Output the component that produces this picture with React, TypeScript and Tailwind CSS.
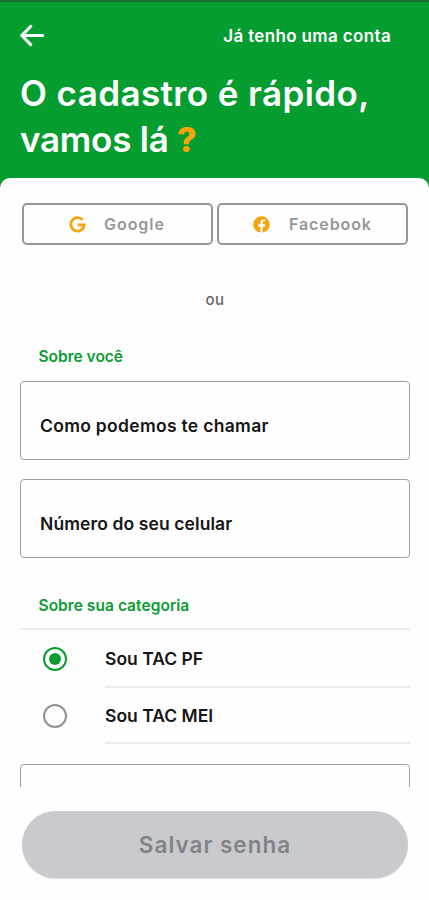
import type { ReactNode } from "react";

const categories = [
    { id: 'pf', name: 'Sou TAC PF', height: 'h-[58px]' },
    { id: 'mei', name: 'Sou TAC MEI', height: 'h-[56px]' },
]

function BackIcon() {
    return (
        <svg width="26" height="24" viewBox="0 0 26 24" fill="none" stroke="#fff" strokeWidth="3.2" strokeLinecap="round" strokeLinejoin="round">
            <path d="M1.8 11.5H22.6M10.6 2.5L1.8 11.5L10.6 20.5"/>
        </svg>
    )
}

function GoogleIcon() {
    return (
        <svg width="17" height="17" viewBox="0 0 17 17" fill="none" stroke="#f7a30c" strokeWidth="2.8">
            <path d="M13.5 3.9A6.7 6.7 0 1 0 15.2 8.9H8.7"/>
        </svg>
    )
}

function FacebookIcon() {
    return (
        <svg width="17" height="17" viewBox="0 0 17 17">
            <circle cx="8.5" cy="8.5" r="8.3" fill="#f7a30c"/>
            <path d="M7.4 17V10.7H5.2V8.3H7.4V6.6C7.4 4.3 8.7 3.2 10.7 3.2L12.3 3.3V5.3H11.1C10 5.3 9.7 5.9 9.7 6.7V8.3H12.2L11.8 10.7H9.7V17Z" fill="#fff"/>
        </svg>
    )
}

function SocialButton({ icon, children }: { icon: ReactNode, children: ReactNode }) {
    return (
        <button className="flex h-[42px] w-[191px] items-center rounded-[5px] border-2 border-[#979797] text-[16px] font-semibold leading-none text-[#979797]">
            {icon}
            {children}
        </button>
    )
}

function Field({ children }: { children?: ReactNode }) {
    return (
        <div className="flex h-[79px] shrink-0 items-center rounded-[4px] border-[1.5px] border-[#a0a0a0] pl-[19px] pt-[11px] text-[17.5px] font-semibold">
            {children}
        </div>
    )
}

function Radio({ checked }: { checked: boolean }) {
    return checked ? (
        <span className="flex size-6 items-center justify-center rounded-full border-2 border-[#0a9c32]">
            <span className="size-3 rounded-full bg-[#0a9c32]"/>
        </span>
    ) : (
        <span className="size-6 rounded-full border-2 border-[#929292]"/>
    )
}

export default function App() {
    return (
        <div className="flex h-[900px] w-[429px] flex-col overflow-hidden bg-[#059d2f] font-['Inter',sans-serif] text-[#161616]">
            <header className="h-[178px] shrink-0 border-t-2 border-[#1b6a31] pl-[20px] pr-[38px] text-white">
                <div className="flex h-[67px] items-center justify-between">
                    <BackIcon/>
                    <a className="whitespace-nowrap pt-[3px] text-[17px] font-semibold tracking-[0.35px]">Já tenho uma conta</a>
                </div>
                <h1 className="mt-px whitespace-nowrap text-[35px] font-semibold leading-[46px]">
                    <span className="tracking-[0.4px]">O cadastro é rápido,</span><br/>
                    <span className="tracking-[-0.25px]">vamos lá <span className="text-[34px] font-extrabold text-[#f7a30c]">?</span></span>
                </h1>
            </header>
            <main className="flex min-h-0 flex-1 flex-col rounded-t-[10px] bg-[#fefefe]">
                <div className="flex h-[609px] shrink-0 flex-col overflow-hidden pl-[20px] pr-[19px] pt-[25px]">
                    <div className="flex justify-between pl-[2px] pr-[2px]">
                        <SocialButton icon={<span className="ml-[45px]"><GoogleIcon/></span>}>
                            <span className="ml-[18px] tracking-[0.95px]">Google</span>
                        </SocialButton>
                        <SocialButton icon={<span className="ml-[34px]"><FacebookIcon/></span>}>
                            <span className="ml-[19px] tracking-[0.9px]">Facebook</span>
                        </SocialButton>
                    </div>
                    <p className="mt-[43px] text-center text-[15px] font-medium leading-[24px] tracking-[0.4px] text-[#666]">ou</p>
                    <h2 className="mt-[32px] pl-[18.5px] text-[15.5px] font-semibold leading-[26px] text-[#0a9c32]">Sobre você</h2>
                    <div className="mt-[11px] flex flex-col gap-[19px]">
                        <Field>
                            <span className="tracking-[0.3px]">Como podemos te chamar</span>
                        </Field>
                        <Field>
                            <span className="tracking-[0.1px]">Número do seu celular</span>
                        </Field>
                    </div>
                    <h2 className="mt-[35px] pl-[18.5px] text-[15.5px] font-semibold leading-[26px] tracking-[0.05px] text-[#0a9c32]">Sobre sua categoria</h2>
                    <div className="mt-[9px] border-t-2 border-[#ececec]">
                        {categories.map((item, i) => (
                            <label key={item.id} className={`flex pl-[23px] ${item.height}`}>
                                <span className="flex items-center">
                                    <Radio checked={i === 0}/>
                                </span>
                                <span className="ml-[38px] flex flex-1 items-center border-b-2 border-[#ececec] pt-[3px] text-[17.5px] font-semibold">
                                    {item.name}
                                </span>
                            </label>
                        ))}
                    </div>
                    <div className="mt-[20px]">
                        <Field/>
                    </div>
                </div>
                <button className="ml-[22px] mr-[21px] mt-[24px] flex h-[67px] shrink-0 items-center justify-center rounded-full bg-[#c9cace] text-[22.5px] font-semibold tracking-[1px] text-[#828387] shadow-[0_1px_1px_#ddd]">
                    Salvar senha
                </button>
            </main>
        </div>
    )
}
